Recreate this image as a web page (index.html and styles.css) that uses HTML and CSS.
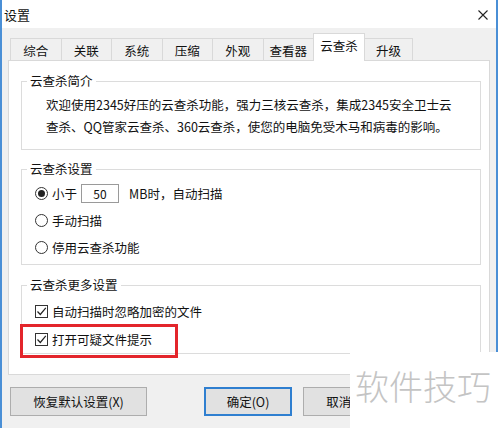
FILE: index.html
```html
<!DOCTYPE html>
<html lang="zh-CN">
<head>
    <meta charset="UTF-8">
    <title>设置</title>
    <link rel="stylesheet" href="styles.css">
</head>
<body>

    <div class="window">
        <div class="titlebar">
            <span class="title">设置</span>
            <svg class="close" width="10" height="10" viewBox="0 0 10 10">
                <path d="M0.5 0.5 L9.5 9.5 M9.5 0.5 L0.5 9.5" stroke="#222" stroke-width="1.1" fill="none"/>
            </svg>
        </div>

        <div class="body">
            <div class="tabs">
                <div class="tab">综合</div>
                <div class="tab">关联</div>
                <div class="tab">系统</div>
                <div class="tab">压缩</div>
                <div class="tab">外观</div>
                <div class="tab">查看器</div>
                <div class="tab active">云查杀</div>
                <div class="tab last">升级</div>
            </div>

            <div class="panel">
                <fieldset class="group">
                    <legend>云查杀简介</legend>
                    <p class="intro">欢迎使用2345好压的云查杀功能，强力三核云查杀，集成2345安全卫士云<br>查杀、QQ管家云查杀、360云查杀，使您的电脑免受木马和病毒的影响。</p>
                </fieldset>

                <fieldset class="group scan">
                    <legend>云查杀设置</legend>
                    <div class="rows">
                        <div class="row">
                            <span class="radio checked"></span>
                            <span>小于</span>
                            <span class="size-box">50</span>
                            <span class="after-box">MB时，自动扫描</span>
                        </div>
                        <div class="row">
                            <span class="radio"></span>
                            <span>手动扫描</span>
                        </div>
                        <div class="row">
                            <span class="radio"></span>
                            <span>停用云查杀功能</span>
                        </div>
                    </div>
                </fieldset>

                <fieldset class="group more">
                    <legend>云查杀更多设置</legend>
                    <div class="rows">
                        <div class="row">
                            <span class="check">
                                <svg width="11" height="11" viewBox="0 0 11 11"><path d="M1.5 5.5 L4.3 8.5 L9.8 1.8" stroke="#222" stroke-width="1.2" fill="none"/></svg>
                            </span>
                            <span>自动扫描时忽略加密的文件</span>
                        </div>
                        <div class="row marked">
                            <span class="check">
                                <svg width="11" height="11" viewBox="0 0 11 11"><path d="M1.5 5.5 L4.3 8.5 L9.8 1.8" stroke="#222" stroke-width="1.2" fill="none"/></svg>
                            </span>
                            <span>打开可疑文件提示</span>
                        </div>
                    </div>
                </fieldset>
            </div>

            <div class="buttons">
                <button class="btn reset">恢复默认设置(X)</button>
                <button class="btn ok">确定(O)</button>
                <button class="btn cancel">取消(C)</button>
            </div>
        </div>
    </div>

    <div class="watermark">软件技巧</div>

</body>
</html>
```

FILE: styles.css
```css
* { box-sizing: border-box; }
body { margin: 0; width: 500px; height: 428px; overflow: hidden; background: #fff; font-family: "Noto Sans CJK SC", "Liberation Sans", sans-serif; font-size: 12.5px; color: #111; }

.window { width: 498px; height: 428px; border-left: 2px solid #4a8fd6; border-right: 2px solid #4a8fd6; display: flex; flex-direction: column; }

.titlebar { height: 28px; background: #fff; display: flex; align-items: center; justify-content: space-between; padding: 0 8px 0 2px; }
.title { font-size: 13px; }
.close { margin-top: 1px; }

.body { flex: 1; background: #f0f0f0; padding: 10px 0 0 6px; }

.tabs { display: flex; align-items: flex-end; height: 22px; margin-left: 2px; }
.tab { width: 50.5px; height: 22px; border: 1px solid #d9d9d9; border-right: none; border-bottom: none; background: #f0f0f0; display: flex; align-items: center; justify-content: center; padding-top: 2px; }
.tab.active { width: 52px; height: 28px; margin-bottom: -1px; background: #fff; position: relative; z-index: 1; border-right: 1px solid #d9d9d9; padding-top: 0; padding-bottom: 4px; }
.tab.last { width: 48px; border-left: none; border-right: 1px solid #d9d9d9; }

.panel { width: 482px; background: #fff; border: 1px solid #d9d9d9; padding: 12px 8px 20px 12px; }

.group { margin: 0; padding: 0; border: 1px solid #dcdcdc; min-width: 0; }
.group legend { margin-left: 5px; padding: 0 3px; line-height: 16px; }
.group.scan { margin-top: 11px; }
.group.more { margin-top: 12px; }

.intro { margin: 0; padding: 5px 0 11px 24px; line-height: 22px; }

.scan .rows { padding: 3px 0 3px 0; }
.scan .row { height: 27px; }
.more .rows { padding: 4px 0 0 0; }
.more .row { height: 28px; }

.row { display: flex; align-items: center; padding-left: 13px; gap: 4px; position: relative; }

.radio { width: 13px; height: 13px; border: 1px solid #333; border-radius: 50%; display: flex; align-items: center; justify-content: center; }
.radio.checked::after { content: ""; width: 7px; height: 7px; border-radius: 50%; background: #222; }

.check { width: 13px; height: 13px; border: 1px solid #333; display: flex; align-items: center; justify-content: center; }

.size-box { width: 38px; height: 19px; border: 1px solid #9a9a9a; display: flex; align-items: center; justify-content: center; font-size: 12px; }
.after-box { margin-left: 6px; }

.row.marked::after { content: ""; position: absolute; left: -2px; top: -1px; width: 152px; height: 28px; border: 3px solid #e3252b; }

.buttons { display: flex; margin-top: 12px; padding-left: 2px; }
.btn { height: 29px; background: #e1e1e1; border: 1px solid #adadad; font-family: inherit; font-size: 12.5px; color: #111; padding: 0; }
.btn.reset { width: 137px; }
.btn.ok { width: 88px; margin-left: 57px; border: 2px solid #2f7fd0; }
.btn.cancel { width: 88px; margin-left: 11px; }

.watermark { position: absolute; left: 350px; top: 352px; width: 150px; height: 76px; background: #fff; color: #c4c4c4; font-size: 34px; font-weight: 300; line-height: 34px; padding: 17px 0 0 5px; }
```
